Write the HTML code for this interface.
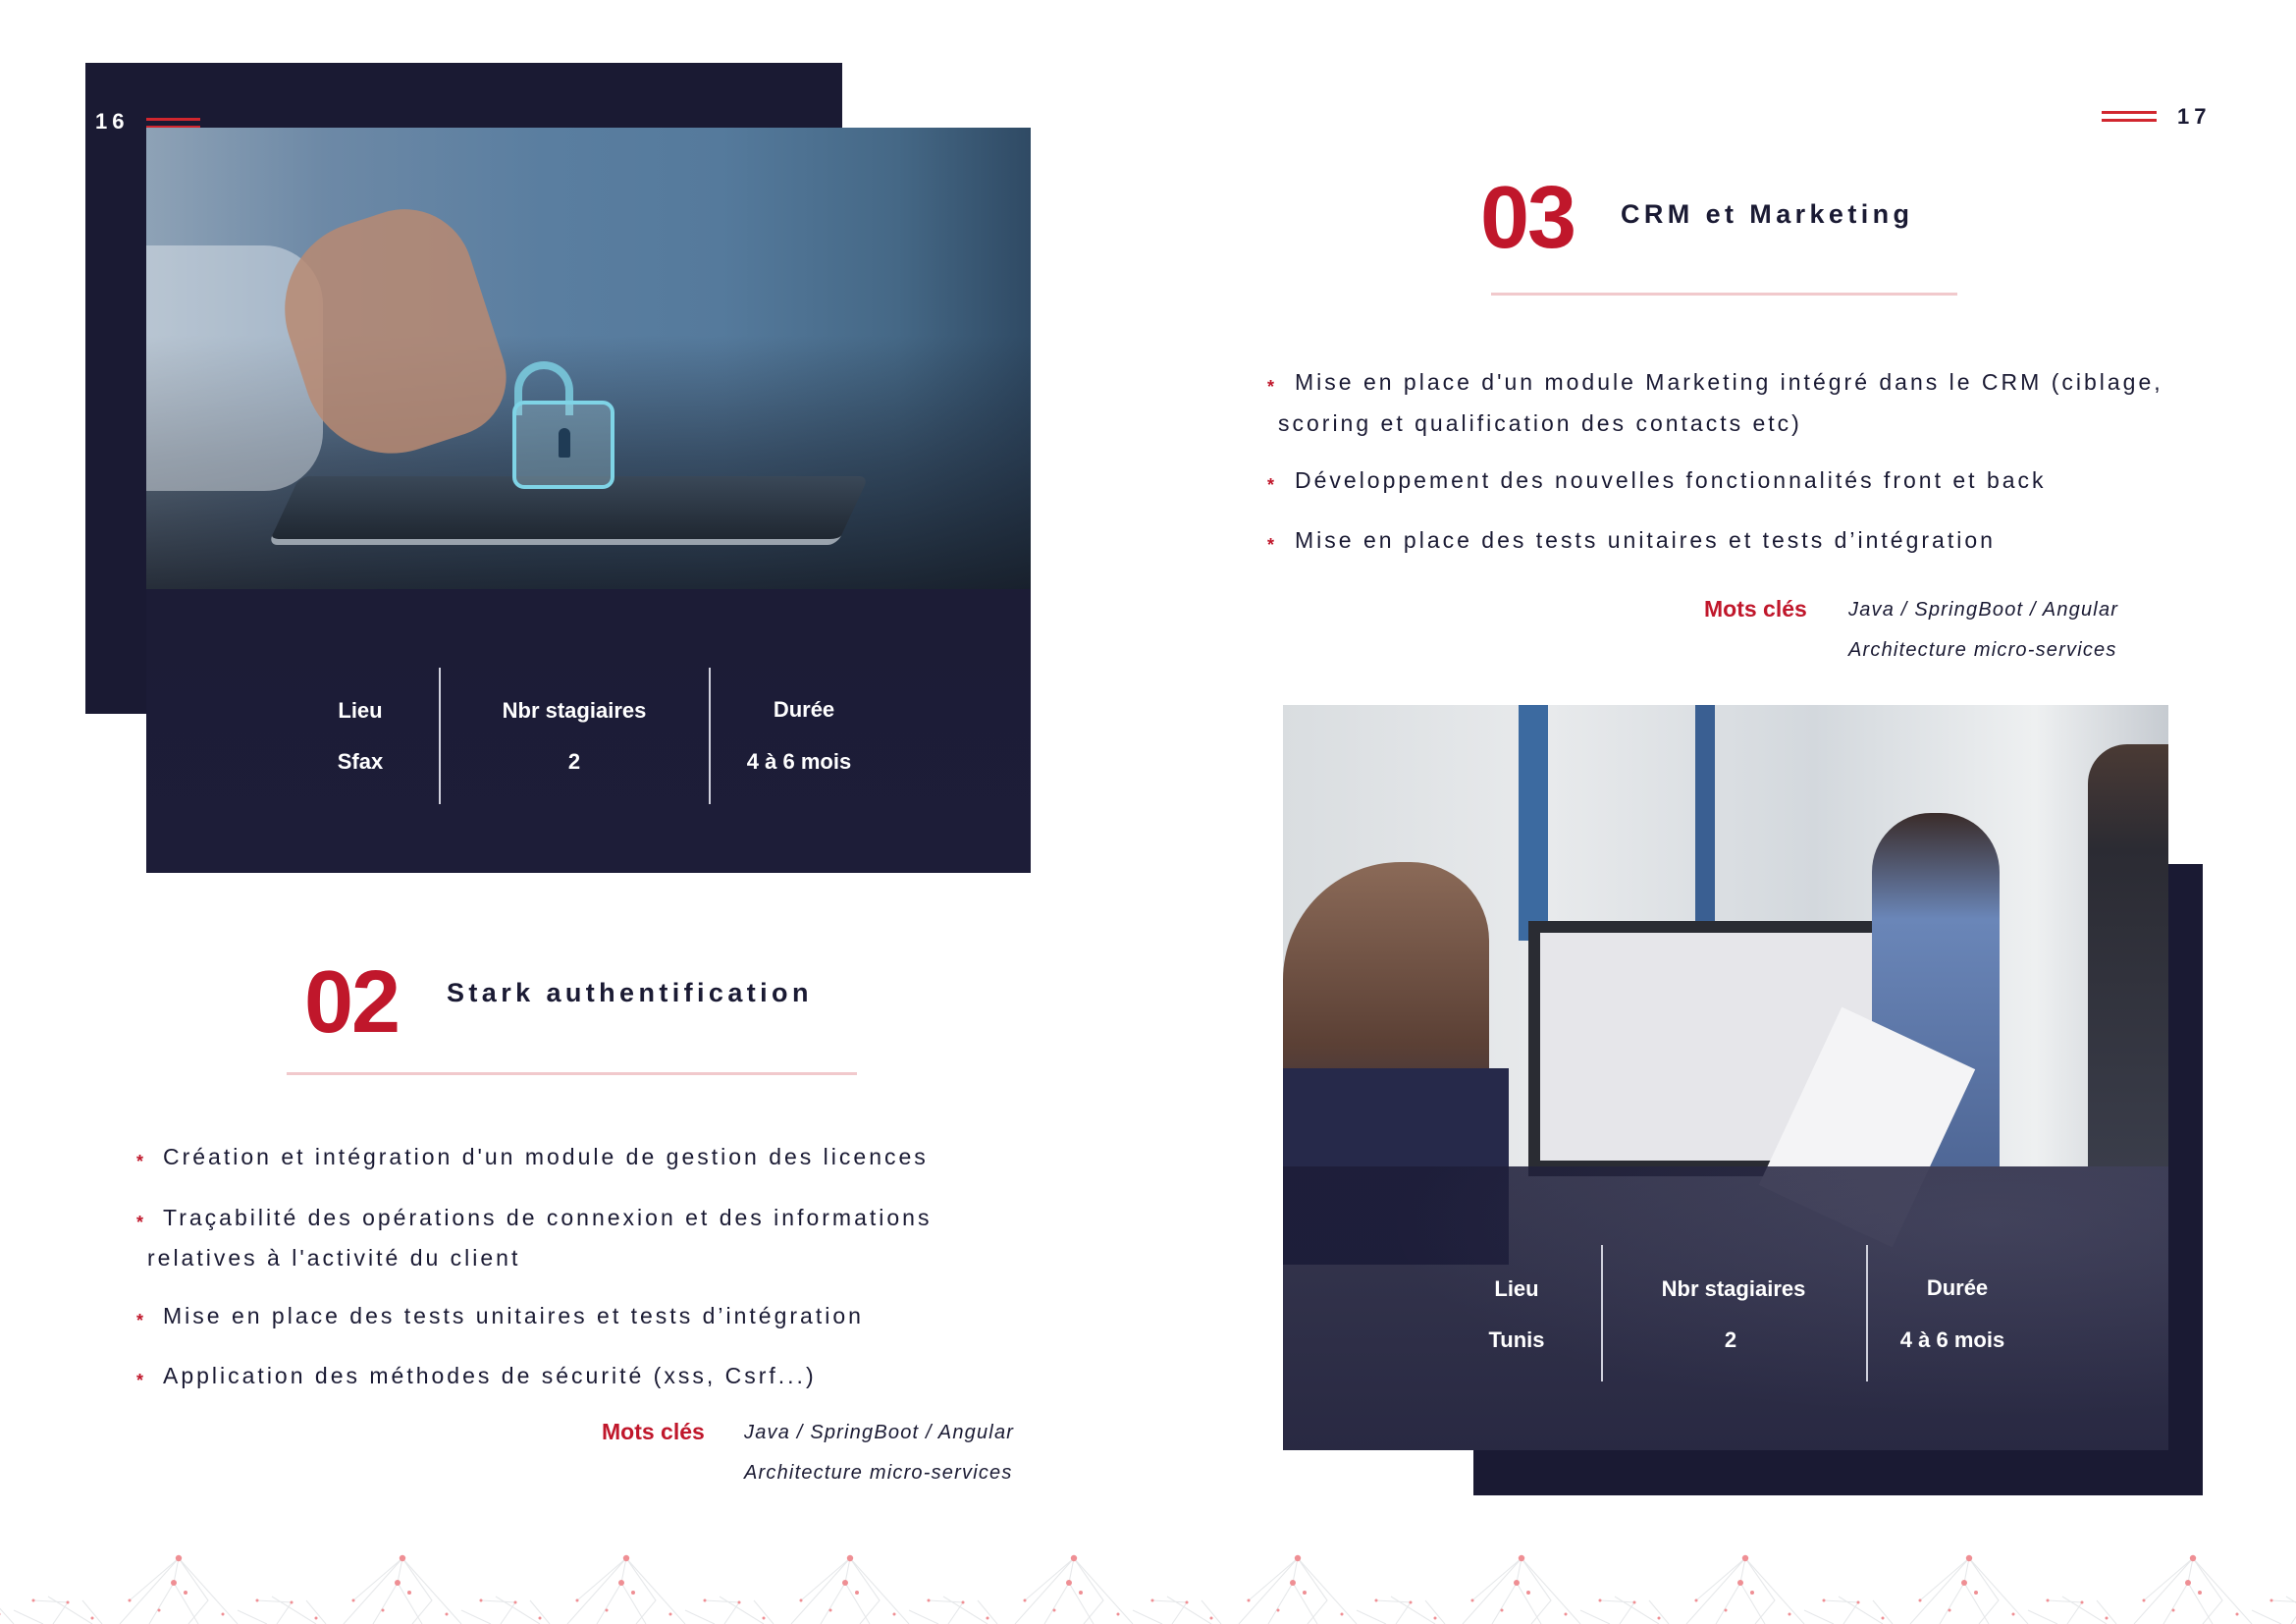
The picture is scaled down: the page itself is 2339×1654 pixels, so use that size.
<!DOCTYPE html>
<html><head><meta charset="utf-8">
<style>
*{margin:0;padding:0;box-sizing:border-box}
body{width:2339px;height:1654px;background:#fff;position:relative;overflow:hidden;font-family:"Liberation Sans",sans-serif;color:#1a1a33}
.a{position:absolute}
.navy{background:#1a1a33}
.stat{position:absolute;color:#fff;font-weight:bold;font-size:22px;text-align:center;width:240px;white-space:nowrap}
.div{position:absolute;width:2px;background:#cfd0dc}
.num{position:absolute;color:#c0172b;font-weight:bold;font-size:90px;line-height:1;letter-spacing:-2px}
.title{position:absolute;font-weight:bold;font-size:27px;letter-spacing:4.4px;white-space:nowrap;line-height:1}
.pink{position:absolute;height:3px;background:#f1c9cc}
.li{position:absolute;font-size:23px;letter-spacing:3px;white-space:nowrap;line-height:1;color:#1a1a33}
.st{position:absolute;color:#c0172b;font-size:18px;font-weight:bold;line-height:1}
.mc{position:absolute;color:#c0172b;font-weight:bold;font-size:23px;line-height:1;white-space:nowrap}
.it{position:absolute;font-style:italic;font-size:20px;letter-spacing:1.2px;line-height:1;white-space:nowrap;color:#1a1a33}
.pg{position:absolute;font-weight:bold;font-size:22px;letter-spacing:5px;line-height:1}
.dl{position:absolute;height:3px;background:#d1262e}
</style></head><body>

<!-- LEFT PAGE -->
<div class="a navy" style="left:87px;top:64px;width:771px;height:663px"></div>
<div class="pg" style="left:97px;top:113px;color:#fff">16</div>
<div class="dl" style="left:149px;top:120px;width:55px"></div>
<div class="dl" style="left:149px;top:128px;width:55px"></div>

<div class="a" style="left:149px;top:130px;width:901px;height:759px;background:#1b1b35;overflow:hidden">
  <div class="a" style="left:0;top:0;width:901px;height:470px;background:linear-gradient(90deg,#8ea2b6 0%,#6d89a6 20%,#5a7ea0 45%,#557a9c 65%,#456886 85%,#2f4a64 100%)"></div>
  <div class="a" style="left:0;top:0;width:901px;height:470px;background:linear-gradient(180deg,rgba(255,255,255,0) 0%,rgba(255,255,255,0) 45%,rgba(30,40,55,.55) 72%,rgba(20,25,35,.85) 100%)"></div>
  <div class="a" style="left:0;top:120px;width:180px;height:250px;background:rgba(235,240,245,.45);border-radius:0 60px 60px 0"></div>
  <div class="a" style="left:150px;top:90px;width:200px;height:240px;background:#b98a72;border-radius:90px 70px 60px 90px;transform:rotate(-18deg);opacity:.85"></div>
  <div class="a" style="left:140px;top:355px;width:580px;height:70px;background:linear-gradient(180deg,#3a4858,#1f2731);border-radius:10px;transform:skewX(-25deg);border-bottom:6px solid #9aa3ad"></div>
  <div class="a" style="left:375px;top:238px;width:60px;height:55px;border:8px solid #7fd4e6;border-bottom:none;border-radius:30px 30px 0 0;opacity:.8"></div>
  <div class="a" style="top:278px;width:104px;height:90px;border:4px solid #7fd4e6;border-radius:12px;background:rgba(160,200,215,.35);left:373px"></div>
  <div class="a" style="left:420px;top:306px;width:12px;height:30px;background:#1f3b55;border-radius:6px 6px 2px 2px"></div>
  <div class="a" style="left:0;top:470px;width:901px;height:289px;background:linear-gradient(180deg,#1c1c36,#1d1d38)"></div>
</div>
<div class="stat" style="left:247px;top:711px">Lieu</div>
<div class="stat" style="left:247px;top:763px">Sfax</div>
<div class="div" style="left:447px;top:680px;height:139px"></div>
<div class="stat" style="left:465px;top:711px">Nbr stagiaires</div>
<div class="stat" style="left:465px;top:763px">2</div>
<div class="div" style="left:722px;top:680px;height:139px"></div>
<div class="stat" style="left:699px;top:710px">Durée</div>
<div class="stat" style="left:694px;top:763px">4 à 6 mois</div>

<div class="num" style="left:310px;top:976px">02</div>
<div class="title" style="left:455px;top:998px">Stark authentification</div>
<div class="pink" style="left:292px;top:1092px;width:581px"></div>

<div class="st" style="left:139px;top:1174px">*</div><div class="li" style="left:166px;top:1167px">Création et intégration d'un module de gestion des licences</div>
<div class="st" style="left:139px;top:1236px">*</div><div class="li" style="left:166px;top:1229px">Traçabilité des opérations de connexion et des informations</div>
<div class="li" style="left:150px;top:1270px">relatives à l'activité du client</div>
<div class="st" style="left:139px;top:1336px">*</div><div class="li" style="left:166px;top:1329px">Mise en place des tests unitaires et tests d’intégration</div>
<div class="st" style="left:139px;top:1397px">*</div><div class="li" style="left:166px;top:1390px">Application des méthodes de sécurité (xss, Csrf...)</div>

<div class="mc" style="left:613px;top:1447px">Mots clés</div>
<div class="it" style="left:758px;top:1449px">Java / SpringBoot / Angular</div>
<div class="it" style="left:758px;top:1490px">Architecture micro-services</div>

<!-- RIGHT PAGE -->
<div class="dl" style="left:2141px;top:113px;width:56px"></div>
<div class="dl" style="left:2141px;top:121px;width:56px"></div>
<div class="pg" style="left:2218px;top:108px">17</div>

<div class="num" style="left:1508px;top:177px">03</div>
<div class="title" style="left:1651px;top:205px">CRM et Marketing</div>
<div class="pink" style="left:1519px;top:298px;width:475px"></div>

<div class="st" style="left:1291px;top:385px">*</div><div class="li" style="left:1319px;top:378px">Mise en place d'un module Marketing intégré dans le CRM (ciblage,</div>
<div class="li" style="left:1302px;top:420px">scoring et qualification des contacts etc)</div>
<div class="st" style="left:1291px;top:485px">*</div><div class="li" style="left:1319px;top:478px">Développement des nouvelles fonctionnalités front et back</div>
<div class="st" style="left:1291px;top:546px">*</div><div class="li" style="left:1319px;top:539px">Mise en place des tests unitaires et tests d’intégration</div>

<div class="mc" style="left:1736px;top:609px">Mots clés</div>
<div class="it" style="left:1883px;top:611px">Java / SpringBoot / Angular</div>
<div class="it" style="left:1883px;top:652px">Architecture micro-services</div>

<div class="a navy" style="left:1501px;top:880px;width:743px;height:643px"></div>
<div class="a" style="left:1307px;top:718px;width:902px;height:759px;overflow:hidden;background:#cfd3d8">
  <div class="a" style="left:0;top:0;width:902px;height:470px;background:linear-gradient(90deg,#d9dde0 0%,#e8eaec 30%,#d3d8dd 60%,#eef0f1 85%,#c6cbd1 100%)"></div>
  <div class="a" style="left:240px;top:0;width:30px;height:240px;background:#3c6aa0"></div>
  <div class="a" style="left:420px;top:0;width:20px;height:300px;background:#3a5f92"></div>
  <div class="a" style="left:250px;top:220px;width:390px;height:260px;background:#2a2c33"></div>
  <div class="a" style="left:262px;top:232px;width:366px;height:232px;background:#e6e6ea"></div>
  <div class="a" style="left:0;top:160px;width:210px;height:310px;background:linear-gradient(180deg,#8b6a58,#5b4035 60%,#2c2e48);border-radius:120px 80px 0 0"></div>
  <div class="a" style="left:0;top:370px;width:230px;height:200px;background:#26294a"></div>
  <div class="a" style="left:600px;top:110px;width:130px;height:360px;background:linear-gradient(180deg,#3a2c2a,#6a86b8 30%,#4f6796);border-radius:60px 60px 0 0"></div>
  <div class="a" style="left:820px;top:40px;width:82px;height:430px;background:linear-gradient(180deg,#4a3a34,#2b2b33 25%,#3a3d4a);border-radius:40px 0 0 0"></div>
  <div class="a" style="left:520px;top:330px;width:150px;height:200px;background:#f4f4f6;transform:rotate(25deg)"></div>
  <div class="a" style="left:0;top:470px;width:902px;height:289px;background:linear-gradient(180deg,rgba(28,28,55,.85),rgba(28,28,55,.93))"></div>
  <div class="a" style="left:0;top:470px;width:902px;height:289px;background:radial-gradient(ellipse at 80% 20%,rgba(120,120,150,.2),rgba(0,0,0,0) 60%)"></div>
</div>
<div class="stat" style="left:1425px;top:1300px">Lieu</div>
<div class="stat" style="left:1425px;top:1352px">Tunis</div>
<div class="div" style="left:1631px;top:1268px;height:139px"></div>
<div class="stat" style="left:1646px;top:1300px">Nbr stagiaires</div>
<div class="stat" style="left:1643px;top:1352px">2</div>
<div class="div" style="left:1901px;top:1268px;height:139px"></div>
<div class="stat" style="left:1874px;top:1299px">Durée</div>
<div class="stat" style="left:1869px;top:1352px">4 à 6 mois</div>

<!-- bottom network -->
<svg class="a" style="left:0;top:1560px" width="2339" height="94" viewBox="0 0 2339 94">
<defs>
<pattern id="net" x="-46" y="0" width="228" height="94" patternUnits="userSpaceOnUse">
 <g stroke="#e6e8ea" stroke-width="1.1" fill="none">
  <path d="M228 27 L168 94 M228 27 L288 94 M228 27 L223 52 L198 94 M223 52 L248 94 M228 27 L258 70 L238 94 M178 70 L228 27"/>
  <path d="M0 27 L-60 94 M0 27 L60 94 M0 27 L-5 52 L-30 94 M-5 52 L20 94 M0 27 L30 70 L10 94 M-50 70 L0 27"/>
  <path d="M80 70 L115 72 L100 94 M95 66 L140 94 M130 70 L150 94 M60 80 L90 94"/>
 </g>
 <g fill="#ef8f94">
  <circle cx="228" cy="27" r="3.2"/><circle cx="0" cy="27" r="3.2"/><circle cx="223" cy="52" r="3"/><circle cx="-5" cy="52" r="3"/>
  <circle cx="235" cy="62" r="2"/><circle cx="7" cy="62" r="2"/><circle cx="115" cy="72" r="1.5"/><circle cx="80" cy="70" r="1.5"/><circle cx="140" cy="88" r="1.5"/><circle cx="45" cy="84" r="1.5"/><circle cx="178" cy="70" r="1.5"/><circle cx="208" cy="80" r="1.5"/>
 </g>
</pattern>
</defs>
<rect width="2339" height="94" fill="url(#net)"/>
</svg>
</body></html>
